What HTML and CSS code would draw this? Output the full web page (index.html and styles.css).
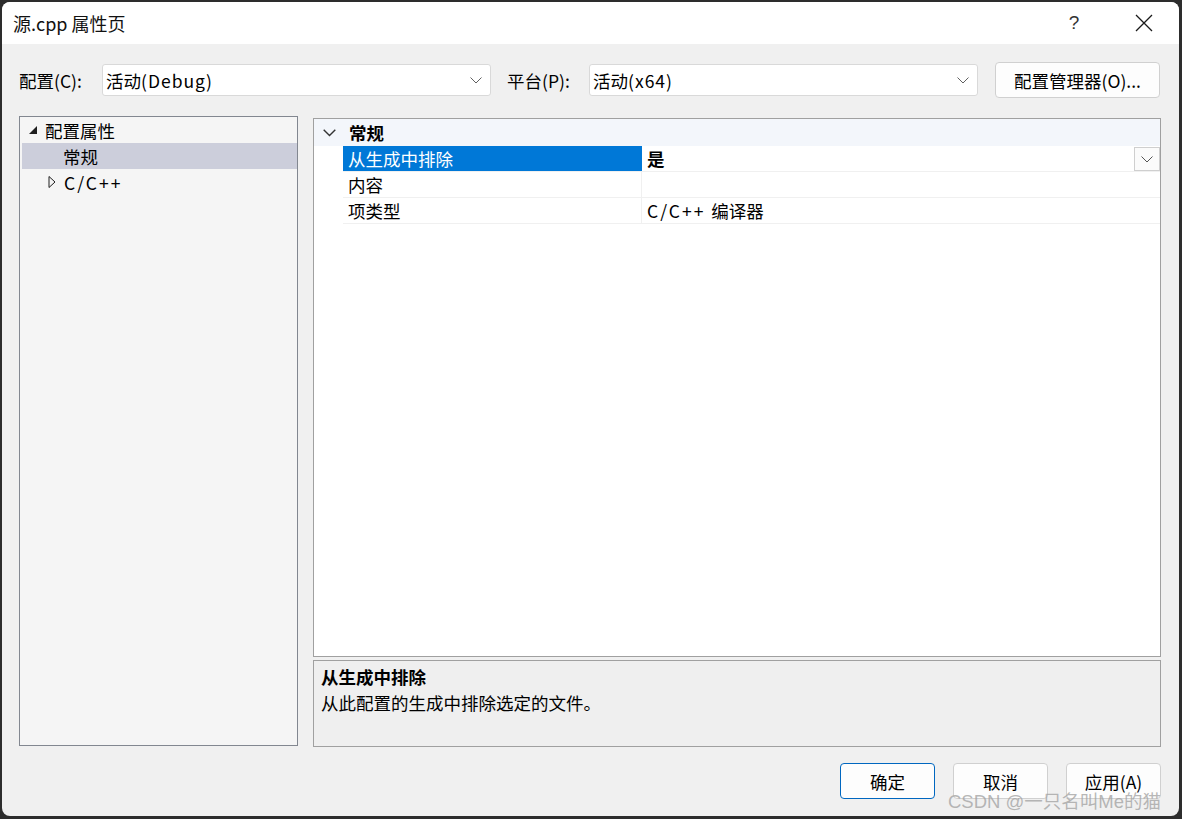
FILE: index.html
```html
<!DOCTYPE html>
<html lang="zh-CN">
<head>
<meta charset="UTF-8">
<title>源.cpp 属性页</title>
<link rel="stylesheet" href="styles.css">
</head>
<body>
<div class="window">
  <div class="titlebar">
    <span class="title">源.cpp 属性页</span>
    <div class="title-btns">
      <span class="tbtn help">?</span>
      <span class="tbtn">
        <svg width="18" height="18" viewBox="0 0 18 18"><path d="M1 1 L17 17 M17 1 L1 17" stroke="#1a1a1a" stroke-width="1.3" fill="none"/></svg>
      </span>
    </div>
  </div>

  <div class="content">
    <div class="config-row">
      <span class="lbl lbl-cfg">配置(C):</span>
      <div class="combo">
        <span>活动<span class="lat">(Debug)</span></span>
        <svg width="12" height="7" viewBox="0 0 12 7"><path d="M0.5 0.5 L6 6 L11.5 0.5" stroke="#606060" fill="none"/></svg>
      </div>
      <span class="lbl lbl-plat">平台(P):</span>
      <div class="combo">
        <span>活动<span class="lat">(x64)</span></span>
        <svg width="12" height="7" viewBox="0 0 12 7"><path d="M0.5 0.5 L6 6 L11.5 0.5" stroke="#606060" fill="none"/></svg>
      </div>
      <button class="btn mgr">配置管理器(O)...</button>
    </div>

    <div class="main">
      <div class="tree">
        <div class="node">
          <svg class="arrow" width="10" height="10" viewBox="0 0 10 10"><polygon points="9,1 9,9 1,9" fill="#1e1e1e"/></svg>
          <span>配置属性</span>
        </div>
        <div class="node child selected"><span>常规</span></div>
        <div class="node sub">
          <svg class="arrow" width="8" height="12" viewBox="0 0 8 12"><polygon points="1,0.5 7,6 1,11.5" fill="none" stroke="#1e1e1e"/></svg>
          <span class="cpp">C/C++</span>
        </div>
      </div>

      <div class="right">
        <div class="grid">
          <div class="cat">
            <svg class="chev" width="13" height="8" viewBox="0 0 13 8"><path d="M0.7 0.7 L6.5 6.5 L12.3 0.7" stroke="#333" stroke-width="1.4" fill="none"/></svg>
            <span>常规</span>
          </div>
          <div class="prop sel">
            <span class="pname">从生成中排除</span>
            <span class="pval bold">是
              <span class="dd"><svg width="12" height="7" viewBox="0 0 12 7"><path d="M0.5 0.5 L6 6 L11.5 0.5" stroke="#555" fill="none"/></svg></span>
            </span>
          </div>
          <div class="prop">
            <span class="pname">内容</span>
            <span class="pval"></span>
          </div>
          <div class="prop">
            <span class="pname">项类型</span>
            <span class="pval"><span class="cpp">C/C++ </span>编译器</span>
          </div>
        </div>
        <div class="desc">
          <div class="desc-title">从生成中排除</div>
          <div class="desc-text">从此配置的生成中排除选定的文件。</div>
        </div>
      </div>
    </div>

    <div class="footer">
      <button class="btn act default">确定</button>
      <button class="btn act">取消</button>
      <button class="btn act">应用(A)</button>
    </div>
  </div>

  <div class="watermark">CSDN @一只名叫Me的猫</div>
</div>
</body>
</html>
```

FILE: styles.css
```css
* {
  margin: 0;
  padding: 0;
  box-sizing: border-box;
}
body {
  background-color: #2d2d2d;
  font-family: "Noto Sans CJK SC", sans-serif;
  font-size: 17.5px;
  color: #000;
  width: 1182px;
  height: 819px;
  overflow: hidden;
}
.window {
  position: relative;
  margin: 2px 3px 3px 2px;
  width: 1177px;
  height: 814px;
  background-color: #f0f0f0;
  border-radius: 8px;
  overflow: hidden;
}
.titlebar {
  height: 42px;
  background-color: #fff;
  display: flex;
  align-items: center;
  justify-content: space-between;
}
.title {
  padding-left: 11px;
  font-size: 18px;
  color: #111;
}
.title-btns {
  display: flex;
  height: 100%;
}
.tbtn {
  width: 70px;
  display: flex;
  align-items: center;
  justify-content: center;
}
.help {
  font-family: "Liberation Sans", sans-serif;
  font-size: 19px;
  color: #333;
}

.content {
  padding: 18px 18px 0 17px;
}
.config-row {
  display: flex;
  align-items: center;
  height: 36px;
}
.lbl {
  white-space: nowrap;
}
.lbl-cfg {
  width: 83px;
}
.lbl-plat {
  width: 82px;
  padding-left: 16px;
  box-sizing: content-box;
}
.combo {
  width: 389px;
  height: 32px;
  background-color: #fff;
  border: 1px solid #d9d9d9;
  border-radius: 3px;
  display: flex;
  align-items: center;
  justify-content: space-between;
  padding: 0 8px 0 3px;
}
.lat {
  letter-spacing: 1px;
}
.cpp {
  letter-spacing: 2px;
}
.btn {
  font-family: "Noto Sans CJK SC", sans-serif;
  font-size: 17.5px;
  background-color: #fdfdfd;
  border: 1px solid #d0d0d0;
  border-radius: 4px;
  color: #000;
}
.mgr {
  margin-left: 17px;
  width: 165px;
  height: 36px;
}

.main {
  display: flex;
  gap: 15px;
  margin-top: 18px;
  height: 631px;
}
.tree {
  width: 279px;
  height: 630px;
  background-color: #f5f5f5;
  border: 1px solid #828790;
  padding: 0 0 0 2px;
}
.node {
  height: 26px;
  display: flex;
  align-items: center;
  white-space: nowrap;
}
.node .arrow {
  margin-left: 6px;
  margin-right: 7px;
}
.node.child {
  padding-left: 41px;
}
.node.sub .arrow {
  margin-left: 26px;
  margin-right: 8px;
}
.selected {
  background-color: #cccedb;
}

.right {
  flex: 1;
  display: flex;
  flex-direction: column;
  gap: 3px;
  margin-top: 2px;
}
.grid {
  flex: 1;
  background-color: #fff;
  border: 1px solid #a0a0a0;
}
.cat {
  height: 27px;
  background-color: #f3f6fb;
  display: flex;
  align-items: center;
  font-weight: bold;
}
.cat .chev {
  margin-left: 9px;
  margin-right: 13px;
}
.prop {
  display: flex;
  height: 26px;
  margin-left: 29px;
  border-bottom: 1px solid #f0f0f0;
}
.pname {
  width: 299px;
  padding-left: 5px;
  line-height: 25px;
  border-right: 1px solid #f0f0f0;
  white-space: nowrap;
}
.pval {
  flex: 1;
  position: relative;
  padding-left: 5px;
  line-height: 25px;
  white-space: nowrap;
}
.bold {
  font-weight: bold;
}
.sel .pname {
  background-color: #0078d7;
  color: #fff;
  border-right-color: #0078d7;
}
.dd {
  position: absolute;
  right: 0;
  top: 1px;
  width: 26px;
  height: 24px;
  background-color: #fbfbfb;
  border: 1px solid #cfcfcf;
  display: flex;
  align-items: center;
  justify-content: center;
}
.desc {
  height: 87px;
  background-color: #efefef;
  border: 1px solid #a0a0a0;
  padding: 3px 7px;
}
.desc-title {
  font-weight: bold;
  line-height: 26px;
}
.desc-text {
  line-height: 26px;
}

.footer {
  display: flex;
  justify-content: flex-end;
  gap: 18px;
  margin-top: 16px;
}
.act {
  width: 95px;
  height: 36px;
}
.default {
  border: 1px solid #0067c0;
}
.watermark {
  position: absolute;
  left: 946px;
  top: 785px;
  font-size: 18.5px;
  color: rgba(160, 160, 160, 0.75);
  white-space: nowrap;
  font-family: "Liberation Sans", "Noto Sans CJK SC", sans-serif;
}
```
